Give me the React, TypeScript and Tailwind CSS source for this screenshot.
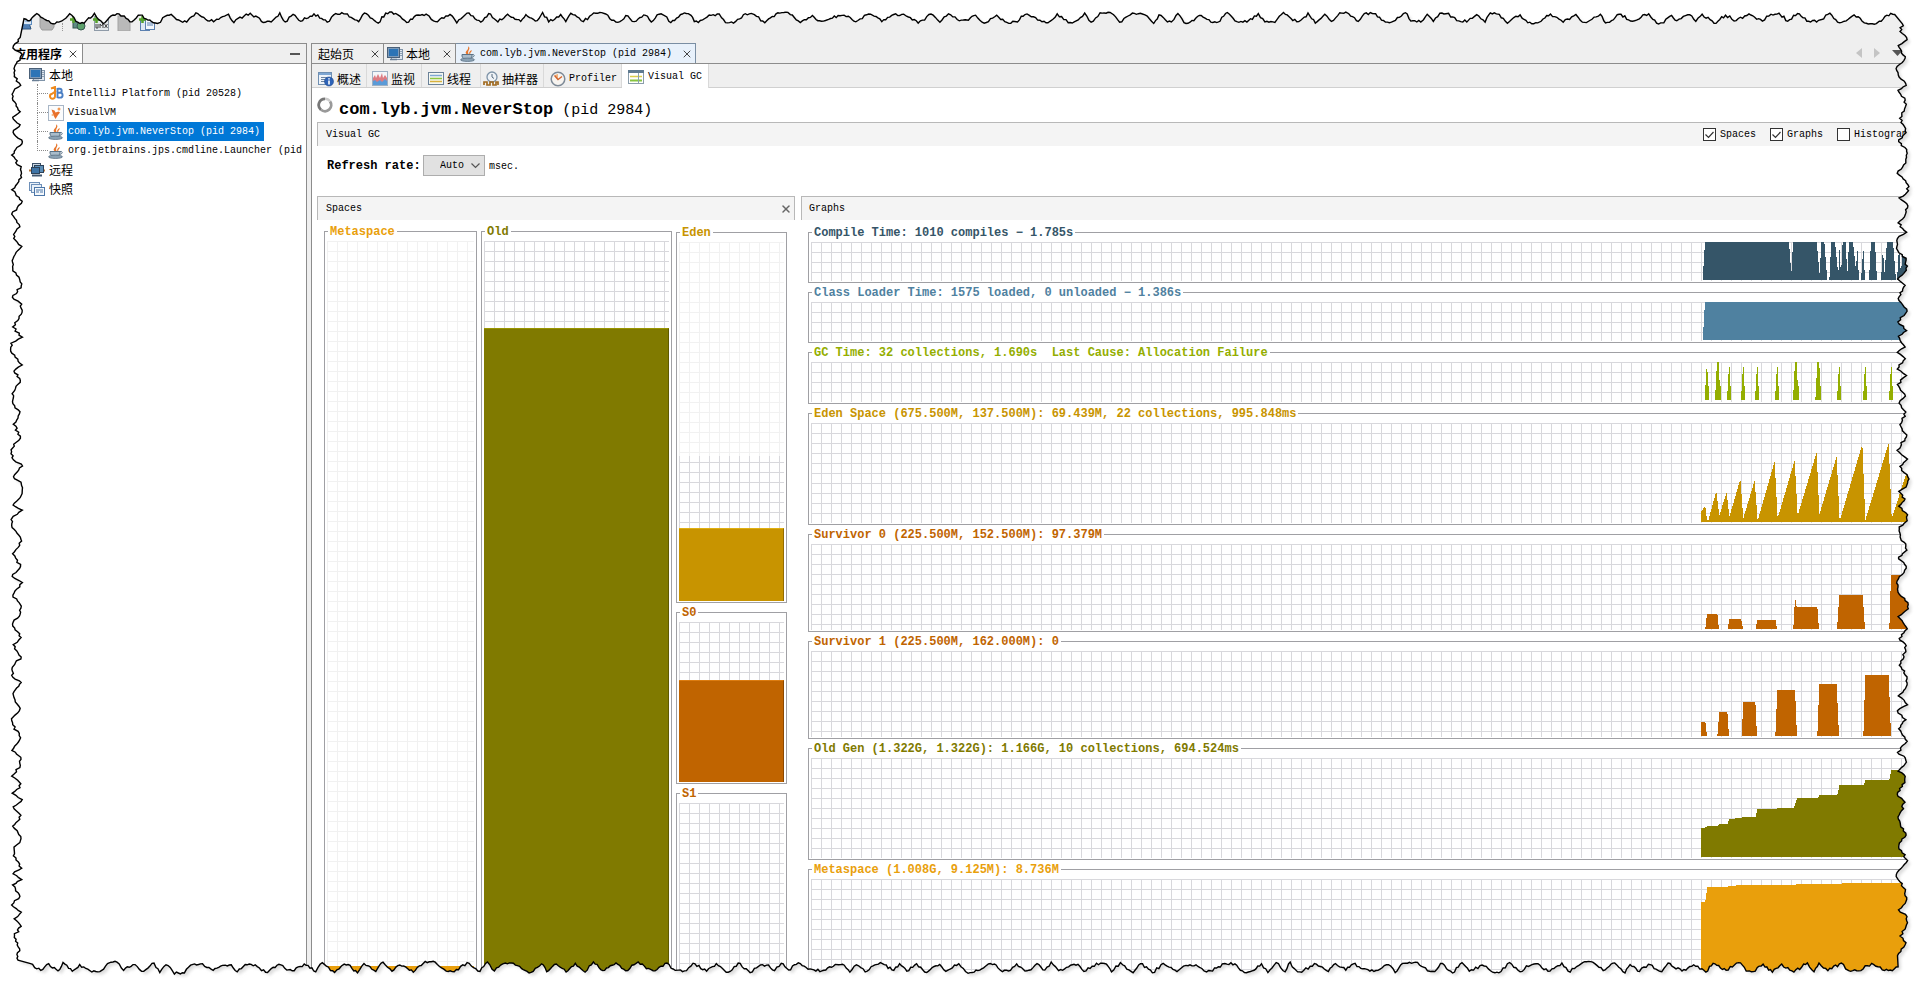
import type { ReactNode } from 'react'
import { X } from 'lucide-react'

const latin = "font-['Liberation_Mono','Noto_Sans_CJK_SC',monospace]"
const hanzi = "font-['Noto_Sans_CJK_SC',sans-serif]"

/* ---------- icons ---------- */

function HostIcon() {
  return (
    <svg className="size-4 shrink-0" viewBox="0 0 16 16" aria-hidden="true">
      <rect x="4.500" y="3.500" width="11" height="10" fill="#dfe6ee" stroke="#7f93a8" />
      <path d="M12 5.500h3M12 7.500h3M12 9.500h3" stroke="#8fa2b5" />
      <rect x=".5" y="1.500" width="12" height="10" fill="#7f9bb8" stroke="#4a6078" />
      <rect x="2" y="3" width="9" height="7" fill="#2c74b6" />
      <path d="M3 13.500h7" stroke="#6a7f95" strokeWidth="1.500" />
    </svg>
  )
}

function RemoteIcon() {
  return (
    <svg className="size-4 shrink-0" viewBox="0 0 16 16" aria-hidden="true">
      <path d="M0 8.500h2M14 8.500h2" stroke="#b9773a" strokeWidth="2" />
      <rect x="3.500" y="1.500" width="8" height="8" fill="#c9d6e2" stroke="#3a5068" />
      <rect x="5.500" y="3.500" width="9" height="7" fill="#5d8fb8" stroke="#2c4259" />
      <rect x="2.500" y="5.500" width="8" height="6" fill="#3e74a6" stroke="#2c4259" />
      <path d="M3 13.500h10" stroke="#41576f" strokeWidth="2" />
    </svg>
  )
}

function SnapshotsIcon() {
  return (
    <svg className="size-4 shrink-0" viewBox="0 0 16 16" aria-hidden="true">
      <rect x=".5" y="1.500" width="10" height="8" fill="#e9f0f8" stroke="#6d8fb8" />
      <rect x="2.500" y="3.500" width="10" height="8" fill="#e9f0f8" stroke="#6d8fb8" />
      <rect x="5.500" y="6.500" width="10" height="8" fill="#f4f8fc" stroke="#4c76a8" />
      <path d="M7 9h7M7 11h3M11 11h3" stroke="#4c76a8" />
    </svg>
  )
}

function IntellijIcon() {
  return (
    <svg className="size-4 shrink-0" viewBox="0 0 16 16" aria-hidden="true">
      <path d="M3 2.500l4-1.500v9.500a2.500 2.500 0 1 1-3-2.700L8 5" fill="none" stroke="#ee8a1d" strokeWidth="2" />
      <path d="M9.500 2v10M9.500 2.800h2.200a2 2 0 0 1 0 4H9.500h2.700a2.400 2.400 0 0 1 0 4.800H9.500" fill="none" stroke="#4a7fc4" strokeWidth="1.900" />
    </svg>
  )
}

function VisualVmIcon() {
  return (
    <svg className="size-4 shrink-0" viewBox="0 0 16 16" aria-hidden="true">
      <rect x=".5" y=".5" width="15" height="15" fill="#fbfcfd" stroke="#a8b6c6" />
      <path d="M3.500 4.500l3 1 1 2 3-1 1.500 1-2 2.500-2.500 4-2-3.500z" fill="#e8702a" />
      <circle cx="11" cy="4" r="1.500" fill="#f19a55" />
      <circle cx="4.500" cy="10" r="1" fill="#f3b27d" />
    </svg>
  )
}

function JavaIcon() {
  return (
    <svg className="size-4 shrink-0" viewBox="0 0 16 16" aria-hidden="true">
      <path d="M7 8.500C3 5.500 9.500 4.500 8 .3c4 2.500-2 4.700 1 8.200z" fill="#e8762c" />
      <path d="M9.800 8c-.7-2 1-2.200 1.700-3.500" fill="none" stroke="#e8762c" strokeWidth="1.200" />
      <path d="M2 8.500h10V10c0 2-2 3-5 3s-5-1-5-3z" fill="#a9bccb" stroke="#5a7286" />
      <path d="M12 8.500c3-.8 3 2.500-.5 3" fill="none" stroke="#5a7286" />
      <ellipse cx="7.500" cy="13.800" rx="7" ry="1.700" fill="#8ba2b4" stroke="#566c7f" strokeWidth=".7" />
    </svg>
  )
}

function OverviewIcon() {
  return (
    <svg className="size-4 shrink-0" viewBox="0 0 16 16" aria-hidden="true">
      <rect x=".5" y="1.500" width="13" height="12" fill="#eef3f9" stroke="#6f8fb2" />
      <path d="M1 3h12" stroke="#7ea6d2" strokeWidth="2" />
      <path d="M3 6.500h6M3 8.500h4M3 10.500h4" stroke="#6b83a0" />
      <circle cx="11" cy="10.500" r="4.500" fill="#2d63b8" stroke="#1d478c" strokeWidth=".6" />
      <path d="M11 9.500v4M11 7.300v1.300" stroke="#fff" strokeWidth="1.600" />
    </svg>
  )
}

function MonitorIcon() {
  return (
    <svg className="size-4 shrink-0" viewBox="0 0 16 16" aria-hidden="true">
      <rect x=".5" y=".5" width="15" height="14" fill="#f3f5f8" stroke="#9db0c4" />
      <path d="M1 11V7l2-3 1 3 2-4 2 4 2-5 1 5 2-3 2 3v4z" fill="#dd7b82" />
      <path d="M1 14v-4l2-1 2 2 3-2 2 2 3-3 2 2v4z" fill="#5a9bd8" />
    </svg>
  )
}

function ThreadsIcon() {
  return (
    <svg className="size-4 shrink-0" viewBox="0 0 16 16" aria-hidden="true">
      <rect x=".5" y="1.500" width="15" height="12" fill="#f5f8f2" stroke="#6a8198" />
      <path d="M2 4.500h12" stroke="#7fa8d2" strokeWidth="1.500" />
      <path d="M2 7.500h12" stroke="#8cc63f" strokeWidth="1.500" />
      <path d="M2 10.500h12" stroke="#d8b13c" strokeWidth="1.500" />
    </svg>
  )
}

function SamplerIcon() {
  return (
    <svg className="size-4 shrink-0" viewBox="0 0 16 16" aria-hidden="true">
      <circle cx="9" cy="6" r="5" fill="#eef2f6" stroke="#7e93a8" strokeWidth="1.300" />
      <path d="M9 3v3l2 1.500" fill="none" stroke="#56697d" />
      <path d="M1 14v-3h3v3h3v-3h3v3h3v-3h2v3" fill="none" stroke="#a06a1f" strokeWidth="1.700" />
    </svg>
  )
}

function ProfilerIcon() {
  return (
    <svg className="size-4 shrink-0" viewBox="0 0 16 16" aria-hidden="true">
      <circle cx="8" cy="8" r="6.800" fill="#f7f4f0" stroke="#7d8a97" strokeWidth="1.500" />
      <path d="M8 8L4.500 4.500A5 5 0 0 1 8 3z" fill="#f2b27a" />
      <path d="M4.500 4.500L8 8.500l4-3" fill="none" stroke="#d2622a" strokeWidth="1.300" />
    </svg>
  )
}

function VisualGcIcon() {
  return (
    <svg className="size-4 shrink-0" viewBox="0 0 16 16" aria-hidden="true">
      <rect x=".5" y="1.500" width="15" height="13" fill="#fff" stroke="#8a9dab" />
      <path d="M0 2.500h16" stroke="#5f7a90" strokeWidth="3" />
      <path d="M2 7.500h12" stroke="#d9cf4a" strokeWidth="1.500" />
      <path d="M2 11.500h12" stroke="#87c440" strokeWidth="2" />
      <path d="M10.500 4v10" stroke="#8aa0b0" />
    </svg>
  )
}

function ToolbarIcon({ kind }: { kind: 'open' | 'save' | 'remote' | 'jmx' | 'dump' | 'snap' }) {
  const plus = <path d="M0 4.500h7M3.500 1v7" stroke="#55a32c" strokeWidth="2.500" />
  return (
    <svg className="size-4" viewBox="0 0 16 16" aria-hidden="true">
      {kind === 'open' && (
        <>
          <path d="M1 8h12l2 6H3z" fill="#4f7fb5" stroke="#2f557f" />
          <rect x="7.500" y="1.500" width="8" height="8" fill="#dbe9f7" stroke="#5c8cc0" />
          <path d="M9 4h5M9 6h5" stroke="#5c8cc0" />
        </>
      )}
      {kind === 'save' && <path d="M1 2h14v10l-2 3H3l-2-3z" fill="#b5b5b5" stroke="#9c9c9c" />}
      {kind === 'remote' && (
        <>
          <rect x="3" y="6" width="8" height="7" fill="#5f8c84" stroke="#35564f" />
          <circle cx="11" cy="11" r="4" fill="#5ba06a" stroke="#35564f" />
          {plus}
        </>
      )}
      {kind === 'jmx' && (
        <>
          <rect x="1.500" y="1.500" width="14" height="14" fill="#e4e8ec" stroke="#8f9ba8" />
          <path d="M3 9v4h2V9M7 13V9l1.500 2L10 9v4M11.500 9l3 4M14.500 9l-3 4" fill="none" stroke="#444" />
          {plus}
        </>
      )}
      {kind === 'dump' && <rect x="2" y="1" width="12" height="15" fill="#b9b9b9" stroke="#a4a4a4" />}
      {kind === 'snap' && (
        <>
          <rect x="1.500" y="5.500" width="9" height="10" fill="#dfe9f5" stroke="#5b80b0" />
          <rect x="6.500" y="2.500" width="9" height="12" fill="#f3f7fc" stroke="#5b80b0" />
          <path d="M8 8h6M8 10h6" stroke="#5b80b0" />
          {plus}
        </>
      )}
    </svg>
  )
}

/* ---------- torn paper edge ---------- */

function makeRandom(seed: number) {
  let s = seed
  return () => {
    s = (s * 16807) % 2147483647
    return s / 2147483647
  }
}

// Returns [distance along the edge, depth] pairs for one ragged side.
function ragged(length: number, seed: number): number[][] {
  const rnd = makeRandom(seed)
  const out: number[][] = []
  let t = 0
  let depth = 5
  let high = false
  while (t < length - 8) {
    const target = high ? rnd() * 3 : 8 + rnd() * 3
    const span = 5 + rnd() * 9
    const n = Math.max(2, Math.round(span / 2))
    for (let i = 1; i <= n; i++) {
      const jitter = i === n ? 0 : (rnd() - 0.5) * 3
      out.push([t + (span * i) / n, depth + ((target - depth) * i) / n + jitter])
    }
    if (rnd() > 0.7) {
      const shelf = 4 + rnd() * 8
      for (let k = 2; k < shelf; k += 2) out.push([t + span + k, target + (rnd() - 0.5) * 2.5])
      t += shelf
    }
    t += span
    depth = target
    high = !high
  }
  return out.filter((p) => p[0] < length)
}

function tornPath() {
  const top = ragged(1874, 71).map(([t, d]) => [22 + t, 12.5 + d])
  const right = ragged(940, 133).map(([t, d]) => [1908 - d, 22 + t])
  const bottom = ragged(1874, 977).map(([t, d]) => [1900 - t, 962 + d])
  const left = ragged(930, 4211).map(([t, d]) => [11.5 + d, 962 - t])
  const all = [...top, ...right, ...bottom, ...left]
  return 'M' + all.map(([x, y]) => `${x.toFixed(1)} ${y.toFixed(1)}`).join('L') + 'Z'
}

const edge = tornPath()
const frame = 'M0 0H1921V986H0Z' + edge

function TornEdge() {
  return (
    <svg
      className="pointer-events-none absolute inset-0 h-full w-full"
      viewBox="0 0 1921 986"
      preserveAspectRatio="none"
      aria-hidden="true"
    >
      <defs>
        <clipPath id="outside">
          <path d={frame} clipRule="evenodd" />
        </clipPath>
        <filter id="soft">
          <feGaussianBlur stdDeviation="1.500" />
        </filter>
      </defs>
      <path d={frame} fill="#fff" fillRule="evenodd" />
      <g clipPath="url(#outside)">
        <path d={edge} transform="translate(3 3)" fill="#dedede" filter="url(#soft)" />
      </g>
      <path d={edge} fill="none" stroke="#000" strokeWidth="1.400" />
    </svg>
  )
}

/* ---------- sidebar ---------- */

function Branch({ last = false }: { last?: boolean }) {
  return (
    <span className="flex w-[11px] shrink-0 flex-col self-stretch">
      <span className="h-[10px] border-b border-l border-dotted border-[#8a8a8a]" />
      <span className={last ? 'flex-1' : 'flex-1 border-l border-dotted border-[#8a8a8a]'} />
    </span>
  )
}

function RootRow({ icon, label }: { icon: ReactNode; label: string }) {
  return (
    <div className={`flex h-[19px] items-center gap-1 pl-[29px] text-[12px] leading-[19px] ${hanzi}`}>
      {icon}
      <span>{label}</span>
    </div>
  )
}

function ChildRow({ icon, label, selected = false, last = false }: { icon: ReactNode; label: string; selected?: boolean; last?: boolean }) {
  return (
    <li className="flex h-[19px] items-center pl-[37px]">
      <Branch last={last} />
      {icon}
      <span
        className={
          selected
            ? 'ml-[3px] bg-[#0078d7] px-px pr-1 leading-[19px] whitespace-nowrap text-white'
            : 'ml-[3px] px-px leading-[19px] whitespace-nowrap'
        }
      >
        {label}
      </span>
    </li>
  )
}

function Sidebar() {
  return (
    <aside className="flex w-[307px] shrink-0 flex-col overflow-hidden border-t border-r border-[#8c8c8c] bg-white">
      <div className="mb-px flex h-5 shrink-0 items-center border-b border-[#8c8c8c] bg-[#efefef]">
        <div className="flex h-full w-[83px] items-center justify-end gap-1 border-r border-[#8c8c8c] bg-white pr-[2px]">
          <span className={`text-[12px] leading-5 font-bold whitespace-nowrap ${hanzi}`}>应用程序</span>
          <button aria-label="关闭应用程序" className="p-px">
            <X size={12} strokeWidth={2} color="#444" />
          </button>
        </div>
        <button aria-label="最小化" className="mr-[6px] ml-auto h-[2px] w-[10px] bg-[#555]" />
      </div>
      <RootRow icon={<HostIcon />} label="本地" />
      <ul>
        <ChildRow icon={<IntellijIcon />} label="IntelliJ Platform (pid 20528)" />
        <ChildRow icon={<VisualVmIcon />} label="VisualVM" />
        <ChildRow icon={<JavaIcon />} label="com.lyb.jvm.NeverStop (pid 2984)" selected />
        <ChildRow icon={<JavaIcon />} label="org.jetbrains.jps.cmdline.Launcher (pid" last />
      </ul>
      <RootRow icon={<RemoteIcon />} label="远程" />
      <RootRow icon={<SnapshotsIcon />} label="快照" />
    </aside>
  )
}

/* ---------- plots ---------- */

const darkGrid =
  'bg-[linear-gradient(to_right,#d8d8dc_1px,transparent_1px),linear-gradient(to_bottom,#d8d8dc_1px,transparent_1px)] bg-[size:10px_10px]'
const lightGrid =
  'bg-[linear-gradient(to_right,#f1f1f1_1px,transparent_1px),linear-gradient(to_bottom,#f1f1f1_1px,transparent_1px)] bg-[size:10px_10px]'

function Plot({ title, color, children }: { title: string; color: string; children: ReactNode }) {
  return (
    <fieldset className="min-w-0 border border-[#a0a0a4] px-[2px] pt-[3px] pb-px">
      <legend className={`ml-px px-[2px] pt-[2px] text-[12px] leading-3 font-bold whitespace-pre ${color}`}>{title}</legend>
      {children}
    </fieldset>
  )
}

type Graph = { title: string; color: string; fill: string; height: string; h: number; d: string }

const spike = (x: number) => `M${x - 7} 114L${x - 4} 60L${x - 1} 14H${x + 1}L${x + 3} 70L${x + 6} 75V114Z`
const wideSpike = (x: number) => `M${x - 9} 114L${x - 3} 0H${x + 3}L${x + 5} 70L${x + 9} 75V114Z`

const graphs: Graph[] = [
  {
    title: 'Compile Time: 1010 compiles − 1.785s',
    color: 'text-[#355568]', fill: 'fill-[#355568]', height: 'h-[39px]', h: 117,
    d: 'M6 114V98L12 0H264L271 98L276 0H347L356 98L361 0H370L379 114ZM385 114L391 0H402L412 98L415 15L420 98L425 0H434L439 98L444 0H456L465 85L469 15L474 114ZM480 114L487 15L492 114ZM504 114L510 0H522L528 114ZM540 114L546 15L550 98L558 0H576L585 114ZM588 114L594 15L600 98L606 0H630L640 114Z',
  },
  {
    title: 'Class Loader Time: 1575 loaded, 0 unloaded − 1.386s',
    color: 'text-[#4f81a0]', fill: 'fill-[#4f81a0]', height: 'h-[39px]', h: 117,
    d: 'M6 114V100L12 0H660V114Z',
  },
  {
    title: 'GC Time: 32 collections, 1.690s  Last Cause: Allocation Failure',
    color: 'text-[#94ae00]', fill: 'fill-[#94ae00]', height: 'h-[40px]', h: 120,
    d: [spike(18), wideSpike(51), spike(85), spike(127), spike(169), spike(229), wideSpike(285), wideSpike(352), spike(415), spike(493), spike(571)].join(''),
  },
  {
    title: 'Eden Space (675.500M, 137.500M): 69.439M, 22 collections, 995.848ms',
    color: 'text-[#c89400]', fill: 'fill-[#c89400]', height: 'h-[100px]', h: 300,
    d: 'M0 297V265L13 250L18 292H22L46 204L55 278L77 207L85 282L118 168L127 286L161 173L170 294L221 115L230 286L281 112L290 278L347 87L355 275L407 100L416 294L484 63L493 292L563 60L572 286L620 140L660 40V297Z',
  },
  {
    title: 'Survivor 0 (225.500M, 152.500M): 97.379M',
    color: 'text-[#c06400]', fill: 'fill-[#c06400]', height: 'h-[86px]', h: 258,
    d: 'M13 255L18 209H49L54 255ZM81 255L84 224H120L126 255ZM165 255L168 227H224L228 255ZM277 255L280 189H282V158L287 189H349L354 255ZM408 255L415 152H485L492 255ZM565 255L570 93H660V255Z',
  },
  {
    title: 'Survivor 1 (225.500M, 162.000M): 0',
    color: 'text-[#c06400]', fill: 'fill-[#c06400]', height: 'h-[86px]', h: 258,
    d: 'M0 255V212H13L18 255ZM49 255L55 182H79L84 255ZM122 255L127 152H163L168 255ZM223 255L229 116H282L288 255ZM349 255L355 98H407L414 255ZM487 255L493 71H563L570 255Z',
  },
  {
    title: 'Old Gen (1.322G, 1.322G): 1.166G, 10 collections, 694.524ms',
    color: 'text-[#807a00]', fill: 'fill-[#807a00]', height: 'h-[100px]', h: 300,
    d: 'M0 297V210L16 208L19 203H51L54 197H81L84 182L122 181L127 176H164L169 152H227L230 149H279L289 119H351L356 110H409L416 80H489L494 65H565L571 35H660V297Z',
  },
  {
    title: 'Metaspace (1.008G, 9.125M): 8.736M',
    color: 'text-[#e99f0c]', fill: 'fill-[#e99f0c]', height: 'h-[120px]', h: 360,
    d: 'M0 360V68H13L19 23H81L85 20L127 19L285 17L291 14L569 13L575 11H660V360Z',
  },
]

function GraphPlot({ graph }: { graph: Graph }) {
  return (
    <Plot title={graph.title} color={graph.color}>
      <div className={`flex justify-end ${graph.height} ${darkGrid}`}>
        <svg className="-mr-[3px] h-full w-[220px] shrink-0" viewBox={`0 0 660 ${graph.h}`} preserveAspectRatio="none" role="img" aria-label={graph.title}>
          <path className={graph.fill} d={graph.d} shapeRendering="crispEdges" />
        </svg>
      </div>
    </Plot>
  )
}

/* ---------- main area ---------- */

function TabClose({ label }: { label: string }) {
  return (
    <button aria-label={label} className="ml-auto">
      <X size={12} strokeWidth={2} color="#444" />
    </button>
  )
}

function DocumentTabs() {
  return (
    <div className="flex h-[21px] shrink-0 items-stretch border-b border-[#8c8c8c] bg-[#efefef] text-[12px] leading-5">
      <div className={`flex w-[72px] items-center border-t border-r border-[#8c8c8c] pr-[2px] pl-[6px] ${hanzi}`}>
        起始页
        <TabClose label="关闭起始页" />
      </div>
      <div className={`flex w-[72px] items-center gap-[3px] border-t border-r border-[#8c8c8c] pr-[2px] pl-[3px] ${hanzi}`}>
        <HostIcon />
        本地
        <TabClose label="关闭本地" />
      </div>
      <div className="flex w-[240px] items-center border-t border-r border-[#7a8ea3] bg-[#e8f1fb] pr-[2px] pl-1 text-[10px] whitespace-nowrap">
        <JavaIcon />
        <span className="ml-1 pt-px">com.lyb.jvm.NeverStop (pid 2984)</span>
        <TabClose label="关闭 NeverStop" />
      </div>
      <div className="ml-auto flex items-center gap-3 pr-[18px]">
        <button aria-label="向左滚动">
          <svg className="h-[10px] w-[6px]" viewBox="0 0 6 10"><path d="M6 0v10L0 5z" fill="#c4c4c4" /></svg>
        </button>
        <button aria-label="向右滚动">
          <svg className="h-[10px] w-[6px]" viewBox="0 0 6 10"><path d="M0 0v10l6-5z" fill="#c4c4c4" /></svg>
        </button>
        <button aria-label="显示列表">
          <svg className="h-[6px] w-[11px]" viewBox="0 0 11 6"><path d="M0 0h11L5.500 6z" fill="#555" /></svg>
        </button>
      </div>
    </div>
  )
}

function ViewTabs() {
  const tab = 'flex items-center gap-[3px] border-r border-[#d9d9d9] pt-[6px]'
  return (
    <nav className="flex h-6 shrink-0 items-stretch border-b border-[#d0d0d0] bg-[#efefef] text-[12px] leading-4">
      <button className={`${tab} w-[55px] pl-[6px] ${hanzi}`}><OverviewIcon />概述</button>
      <button className={`${tab} w-[55px] pl-[5px] ${hanzi}`}><MonitorIcon />监视</button>
      <button className={`${tab} w-[59px] pl-[6px] ${hanzi}`}><ThreadsIcon />线程</button>
      <button className={`${tab} w-[63px] pl-[2px] ${hanzi}`}><SamplerIcon />抽样器</button>
      <button className={`${tab} w-[78px] pl-[6px] text-[10px]`}><ProfilerIcon />Profiler</button>
      <button className="-mb-px flex w-[87px] items-center gap-1 border-r border-[#d9d9d9] bg-white pt-px pl-[6px] text-[10px]">
        <VisualGcIcon />Visual GC
      </button>
    </nav>
  )
}

function Check({ label, checked = false }: { label: string; checked?: boolean }) {
  return (
    <label className="flex items-center gap-1">
      <span className="relative flex size-[13px]">
        <input type="checkbox" defaultChecked={checked} className="peer size-[13px] appearance-none border border-[#333] bg-white" />
        <svg className="pointer-events-none absolute inset-0 hidden size-[13px] peer-checked:block" viewBox="0 0 13 13" aria-hidden="true">
          <path d="M2.500 6.500l3 3 5-5.500" fill="none" stroke="#333" strokeWidth="1.200" />
        </svg>
      </span>
      {label}
    </label>
  )
}

function Spaces() {
  return (
    <section className="flex w-[478px] shrink-0 flex-col">
      <header className="flex h-6 shrink-0 items-center justify-between border-x border-t border-[#b8b8b8] bg-[#f4f4f4] pr-[2px] pl-2">
        <h2>Spaces</h2>
        <button aria-label="关闭 Spaces">
          <X size={12} strokeWidth={3} color="#666" />
        </button>
      </header>
      <div className="grid grid-cols-[153px_191px_111px] items-start gap-1 pt-1 pl-[7px]">
        <Plot title="Metaspace" color="text-[#e99f0c]">
          <div className={`h-[760px] pt-[725px] ${lightGrid}`}>
            <div className="h-full bg-[#e99f0c]" />
          </div>
        </Plot>
        <Plot title="Old" color="text-[#807a00]">
          <div className={`h-[760px] pt-[87px] ${darkGrid}`}>
            <div className="h-full border-t border-r border-t-[#9a9600] border-r-[#5e5a00] bg-[#807a00]" />
          </div>
        </Plot>
        <div className="flex flex-col gap-[2px] pt-px">
          <Plot title="Eden" color="text-[#c89400]">
            <div className="flex h-[359px] flex-col">
              <div className={`h-[214px] ${lightGrid}`} />
              <div className={`h-[72px] ${darkGrid} bg-[position:0_6px]`} />
              <div className="flex-1 border-t border-r border-t-[#e0b010] border-r-[#946c00] bg-[#c89400]" />
            </div>
          </Plot>
          <Plot title="S0" color="text-[#c06400]">
            <div className={`flex h-[160px] flex-col pt-[58px] ${darkGrid}`}>
              <div className="flex-1 border-t border-r border-t-[#dc7c10] border-r-[#8c4800] bg-[#c06400]" />
            </div>
          </Plot>
          <Plot title="S1" color="text-[#c06400]">
            <div className={`h-[200px] ${darkGrid}`} />
          </Plot>
        </div>
      </div>
    </section>
  )
}

function Graphs() {
  return (
    <section className="flex min-w-0 flex-1 flex-col">
      <header className="flex h-6 shrink-0 items-center border-t border-l border-[#b8b8b8] bg-[#f4f4f4] pl-[7px]">
        <h2>Graphs</h2>
      </header>
      <div className="flex flex-col gap-[2px] pt-[5px] pl-[7px]">
        {graphs.map((g) => (
          <GraphPlot key={g.title} graph={g} />
        ))}
      </div>
    </section>
  )
}

export default function App() {
  return (
    <div className={`relative flex h-screen flex-col overflow-hidden bg-[#efefef] text-[10px] text-black ${latin}`}>
      <div className="flex h-[43px] shrink-0 items-start gap-[7px] pt-[15px] pl-4">
        <button aria-label="打开"><ToolbarIcon kind="open" /></button>
        <button aria-label="保存"><ToolbarIcon kind="save" /></button>
        <span className="mt-2 h-2 border-l border-dotted border-[#999]" />
        <button aria-label="添加远程主机"><ToolbarIcon kind="remote" /></button>
        <button aria-label="添加 JMX 连接"><ToolbarIcon kind="jmx" /></button>
        <button aria-label="添加核心转储"><ToolbarIcon kind="dump" /></button>
        <button aria-label="添加快照"><ToolbarIcon kind="snap" /></button>
      </div>

      <div className="flex min-h-0 flex-1 gap-1">
        <Sidebar />
        <main className="flex min-w-0 flex-1 flex-col overflow-hidden border-l border-[#8c8c8c] bg-white">
          <DocumentTabs />
          <ViewTabs />

          <div className="flex min-h-0 flex-1 flex-col pl-[5px]">
            <div className="flex h-[34px] shrink-0 items-center gap-[6px]">
              <svg className="size-4" viewBox="0 0 16 16" aria-hidden="true">
                <path d="M8 1.800a6.200 6.200 0 0 0-4 11" fill="none" stroke="#777" strokeWidth="2.800" />
                <path d="M4 12.800a6.200 6.200 0 0 0 9-8.400" fill="none" stroke="#999" strokeWidth="2.800" />
                <path d="M8 1.800a6 6 0 0 1 5 2.600" fill="none" stroke="#ccc" strokeWidth="2.400" />
              </svg>
              <h1 className="pt-[10px] text-[17px] leading-6 font-bold">
                com.lyb.jvm.NeverStop<span className="text-[15px] font-normal"> (pid 2984)</span>
              </h1>
            </div>

            <div className="flex h-6 shrink-0 items-center border-t border-l border-[#b8b8b8] bg-[#f4f4f4] pr-[13px] pl-2">
              <h2>Visual GC</h2>
              <div className="ml-auto flex gap-[14px]">
                <Check label="Spaces" checked />
                <Check label="Graphs" checked />
                <Check label="Histogram" />
              </div>
            </div>

            <div className="flex h-[50px] shrink-0 items-start pt-[9px] pl-[10px]">
              <label htmlFor="rate" className="w-[96px] pt-px text-[12px] leading-[21px] font-bold">Refresh rate:</label>
              <span className="relative">
                <select id="rate" className="h-[21px] w-[62px] appearance-none border border-[#adadad] bg-[#e1e1e1] pl-4">
                  <option>Auto</option>
                </select>
                <svg className="pointer-events-none absolute top-2 right-[5px] h-[6px] w-[9px]" viewBox="0 0 9 6" aria-hidden="true">
                  <path d="M.5 .5l4 4 4-4" fill="none" stroke="#555" strokeWidth="1.200" />
                </svg>
              </span>
              <span className="ml-1 pt-px leading-[21px]">msec.</span>
            </div>

            <div className="flex min-h-0 flex-1 gap-[6px]">
              <Spaces />
              <Graphs />
            </div>
          </div>
        </main>
      </div>

      <TornEdge />
    </div>
  )
}
